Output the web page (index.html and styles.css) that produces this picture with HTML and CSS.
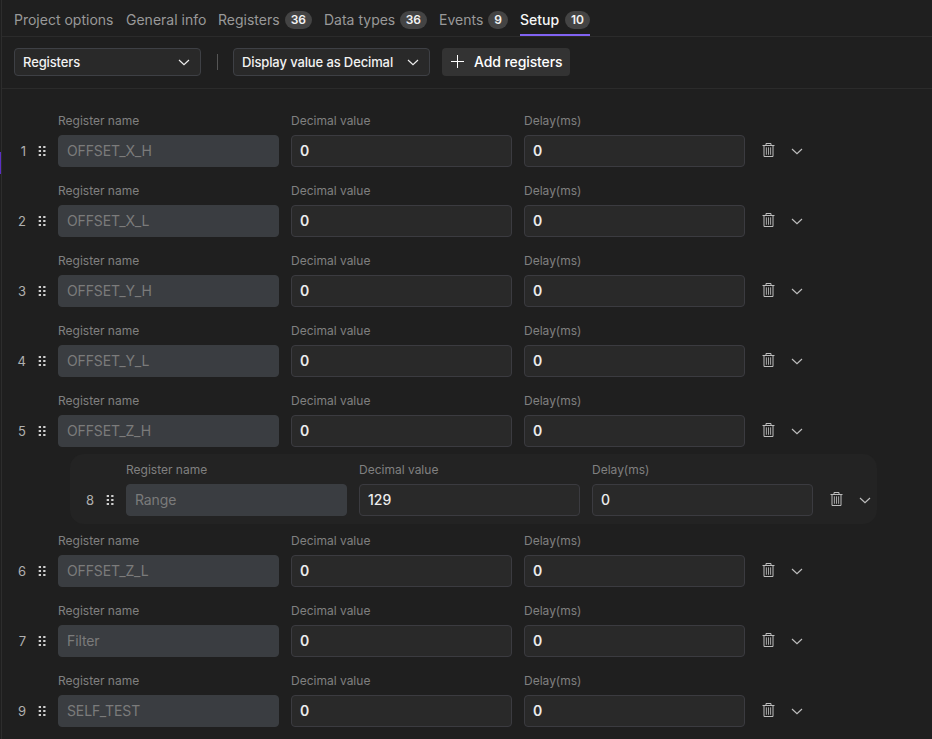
FILE: index.html
```html
<!DOCTYPE html>
<html lang="en">
<head>
<meta charset="utf-8">
<title>Setup</title>
<link rel="stylesheet" href="styles.css">
</head>
<body>
<svg class="defs" width="0" height="0">
  <symbol id="grip" viewBox="0 0 8 10"><path d="M.7 0H3v2H.7zM5.2 0h2.3v2H5.2zM.7 4H3v2H.7zM5.2 4h2.3v2H5.2zM.7 8H3v2H.7zM5.2 8h2.3v2H5.2z"/></symbol>
  <symbol id="trash" viewBox="0 0 13 14"><path d="M.5 2.5h12M4 2.5v-2h5v2M2 2.5v11h9v-11"/><path stroke-width=".85" d="M4.4 4.3v7.5M6.5 4.3v7.5M8.6 4.3v7.5"/></symbol>
  <symbol id="chev" viewBox="0 0 12 7"><path d="M1 1l5 4.7L11 1"/></symbol>
</svg>
<div class="panel">
  <nav class="tabs">
    <a class="tab t1">Project options</a>
    <a class="tab t2">General info</a>
    <a class="tab t3">Registers <span class="badge">36</span></a>
    <a class="tab t4">Data types <span class="badge">36</span></a>
    <a class="tab t5">Events <span class="badge">9</span></a>
    <a class="tab t6 active">Setup <span class="badge">10</span></a>
  </nav>
  <div class="toolbar">
    <div class="select kind">Registers <svg class="chev"><use href="#chev"/></svg></div>
    <span class="divider"></span>
    <div class="select format">Display value as Decimal <svg class="chev"><use href="#chev"/></svg></div>
    <button class="add"><svg class="plus" viewBox="0 0 13 13"><path d="M6.5 0v13M0 6.5h13"/></svg>Add registers</button>
  </div>
  <main class="list" id="list"></main>
</div>
<script src="rows.js"></script>
</body>
</html>
```
FILE: rows.js
```js
const rows = [
  [1, "OFFSET_X_H", 0], [2, "OFFSET_X_L", 0], [3, "OFFSET_Y_H", 0],
  [4, "OFFSET_Y_L", 0], [5, "OFFSET_Z_H", 0], [8, "Range", 129, true],
  [6, "OFFSET_Z_L", 0], [7, "Filter", 0], [9, "SELF_TEST", 0]
];
const field = (label, value, extra = "") =>
  `<div class="field"><span class="label">${label}</span><div class="input ${extra}">${value}</div></div>`;
document.getElementById("list").innerHTML = rows.map(([n, name, value, nested]) => `
  <div class="row${nested ? " nested" : ""}">
    <span class="num">${n}</span>
    <svg class="grip"><use href="#grip"/></svg>
    ${field("Register name", name, "locked")}
    ${field("Decimal value", value)}
    ${field("Delay(ms)", 0)}
    <svg class="trash"><use href="#trash"/></svg>
    <svg class="chev"><use href="#chev"/></svg>
  </div>`).join("");
```
FILE: styles.css
```css
* { box-sizing: border-box; }
body {
  margin: 0;
  height: 739px;
  overflow: hidden;
  background: #1f1f1f;
  color: #f2f2f2;
  font: 14px/20px Inter, sans-serif;
}
body::before {
  content: "";
  position: absolute;
  left: 0;
  top: 152px;
  width: 1px;
  height: 22px;
  background: #5b2fc4;
}
.defs { position: absolute; }
svg { flex: none; fill: none; stroke: #bdbdbd; }
.panel {
  height: 739px;
  margin-left: 1px;
  border-left: 1px solid #2d2d2d;
}
.tabs {
  display: flex;
  gap: 12px;
  height: 37px;
  padding-left: 12px;
  border-bottom: 1px solid #2b2b2b;
}
.tab {
  display: flex;
  align-items: center;
  justify-content: space-between;
  height: 36px;
  padding-top: 6px;
  color: #999;
  white-space: nowrap;
  border-bottom: 2px solid transparent;
}
.t1 { width: 100px; }
.t2 { width: 80px; }
.t3 { width: 94px; }
.t4 { width: 103px; }
.t5 { width: 69px; }
.t6 { width: 70px; }
.active { color: #f5f5f5; font-weight: 500; border-color: #8163f2; }
.badge {
  padding: 0 6px;
  height: 18px;
  border-radius: 9px;
  background: #444;
  color: #f2f2f2;
  font-size: 12px;
  font-weight: 600;
  line-height: 18px;
}
.toolbar {
  display: flex;
  align-items: center;
  height: 52px;
  padding: 0 12px 1px;
  border-bottom: 1px solid #2b2b2b;
}
.select {
  display: flex;
  align-items: center;
  justify-content: space-between;
  height: 28px;
  padding: 0 10px 0 8px;
  border: 1px solid #3e4045;
  border-radius: 4px;
  background: #292929;
  font-size: 13px;
  font-weight: 500;
  letter-spacing: -.12px;
  white-space: nowrap;
}
.kind { width: 187px; }
.format { width: 197px; }
.chev { width: 12px; height: 7px; stroke-width: 1.2; }
.select .chev { stroke: #eee; }
.divider { width: 1px; height: 16px; margin: 0 15px 0 16px; background: #555; }
.add {
  display: flex;
  align-items: center;
  width: 128px;
  height: 28px;
  margin-left: 12px;
  padding: 0 0 0 9px;
  border: 0;
  border-radius: 4px;
  background: #333;
  color: #fff;
  font: 500 14px/20px Inter, sans-serif;
  letter-spacing: -.1px;
  white-space: nowrap;
}
.plus { width: 13px; height: 13px; margin: -1px 10px 0 0; stroke: #fff; }
.list { padding-top: 15px; }
.row {
  display: flex;
  align-items: flex-end;
  width: 807px;
  height: 70px;
  padding-bottom: 7px;
}
.nested {
  margin-left: 68px;
  padding-bottom: 8px;
  border-radius: 14px;
  background: #232323;
}
.num {
  width: 24px;
  height: 32px;
  color: #b0b0b0;
  font-size: 13px;
  line-height: 32px;
  text-align: right;
}
.grip { width: 8px; height: 10px; margin: 0 12px 11px; fill: #d0d0d0; stroke: none; }
.field { width: 221px; margin-right: 12px; }
.label {
  display: block;
  height: 23px;
  color: #808080;
  font-size: 12px;
  line-height: 17px;
}
.input {
  height: 32px;
  padding-left: 8px;
  border: 1px solid #3b3b40;
  border-radius: 4px;
  background: #292929;
  color: #ececec;
  font-weight: 600;
  line-height: 30px;
}
.nested .input { font-weight: 500; }
.input.locked {
  border-color: #3a3d41;
  background: #3a3d41;
  color: #7b7b7b;
  font-weight: 400;
  letter-spacing: -.12px;
}
.trash { width: 13px; height: 14px; margin: 0 16px 10px 5px; }
.row .chev { margin-bottom: 12px; }
```
